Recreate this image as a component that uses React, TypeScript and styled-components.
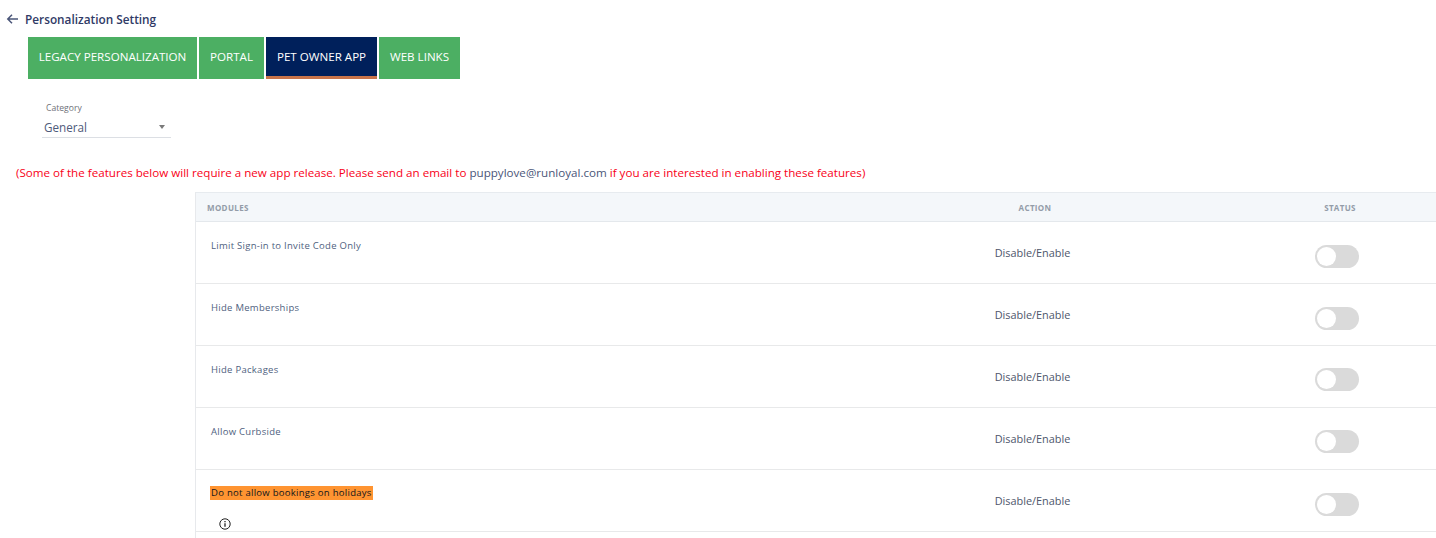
import React from "react";
import styled, { createGlobalStyle } from "styled-components";

const Global = createGlobalStyle`
  html, body { margin: 0; padding: 0; background: #fff; overflow: hidden; }
  body { font-family: "Open Sans", "Liberation Sans", sans-serif; }
`;

const Page = styled.div`
  width: 1436px;
  height: 538px;
  overflow: hidden;
`;

const TitleBar = styled.div`
  display: flex;
  align-items: center;
  height: 37px;
  padding: 1px 0 0 6px;
  box-sizing: border-box;
  gap: 6px;
  color: #2f3a66;
  font-size: 11.8px;
  font-weight: 600;
`;

const Tabs = styled.div`
  display: flex;
  gap: 2px;
  margin-left: 28px;
`;

const Tab = styled.div<{ $active?: boolean; $w: number }>`
  width: ${(p) => p.$w}px;
  height: 42px;
  box-sizing: border-box;
  display: flex;
  align-items: center;
  justify-content: center;
  font-size: 11.6px;
  color: #fff;
  background: ${(p) => (p.$active ? "#00205b" : "#4caf63")};
  border-bottom: ${(p) => (p.$active ? "3px solid #c8744a" : "none")};
  padding-bottom: ${(p) => (p.$active ? "0" : "3px")};
  white-space: nowrap;
`;

const Field = styled.div`
  width: 129px;
  margin: 22px 0 0 42px;
  height: 37px;
  border-bottom: 1px solid #dcdfe4;
  box-sizing: border-box;
  position: relative;
`;

const FieldLabel = styled.div`
  font-size: 8.6px;
  line-height: 12px;
  color: #6f7178;
  padding: 1px 0 0 4px;
`;

const FieldValue = styled.div`
  font-size: 11.7px;
  line-height: 16px;
  margin-top: 5px;
  padding-left: 2px;
  color: #4e5a7a;
`;

const Caret = styled.span`
  position: absolute;
  right: 6px;
  top: 24px;
  width: 0;
  height: 0;
  border-left: 3px solid transparent;
  border-right: 3px solid transparent;
  border-top: 4px solid #7a7a7a;
`;

const Notice = styled.div`
  margin: 26px 0 0 16px;
  height: 18px;
  line-height: 18px;
  font-size: 11.62px;
  color: #f80018;
  white-space: nowrap;
`;

const Email = styled.span`
  color: #4a5578;
`;

const Table = styled.div`
  margin: 10px 0 0 195px;
  border-left: 1px solid #e7e9ec;
  border-top: 1px solid #e7ebef;
`;

const HeadRow = styled.div`
  display: grid;
  grid-template-columns: 646px 386px 1fr;
  height: 29px;
  background: #f4f7fa;
  border-bottom: 1px solid #e4e8ec;
  box-sizing: border-box;
  align-items: center;
  font-size: 8px;
  font-weight: 700;
  letter-spacing: 0.35px;
  color: #939ca8;
`;

const HeadCell = styled.div<{ $align: "left" | "action" | "status" }>`
  padding-left: ${(p) => (p.$align === "left" ? "11px" : p.$align === "status" ? "16px" : "0")};
  text-align: ${(p) => (p.$align === "left" ? "left" : "center")};
`;

const Row = styled.div`
  display: grid;
  grid-template-columns: 646px 386px 1fr;
  height: 62px;
  box-sizing: border-box;
  border-bottom: 1px solid #e8e9ea;
`;

const ModuleCell = styled.div<{ $flagged?: boolean }>`
  padding: ${(p) => (p.$flagged ? "15px" : "16px")} 0 0 14px;
  font-size: 9.5px;
  letter-spacing: 0.28px;
  line-height: 16px;
  color: #4f5f80;
`;

const PlainName = styled.span`
  padding-left: 1px;
`;

const Highlight = styled.span`
  background: #ff9431;
  color: #10141c;
  display: inline-block;
  line-height: 14px;
  padding: 0 1px;
`;

const InfoWrap = styled.div`
  margin: 17px 0 0 9px;
  height: 12px;
  display: flex;
  color: #222;
`;

const ActionCell = styled.div`
  text-align: center;
  padding: 23px 5px 0 0;
  font-size: 10.9px;
  line-height: 16px;
  color: #4e566b;
`;

const StatusCell = styled.div<{ $top: number }>`
  display: flex;
  justify-content: center;
  padding: ${(p) => p.$top}px 0 0 10px;
`;

const Toggle = styled.div`
  width: 44px;
  height: 23px;
  border-radius: 12px;
  background: #dadada;
  position: relative;
`;

const Knob = styled.span`
  position: absolute;
  left: 2px;
  top: 2px;
  width: 19px;
  height: 19px;
  border-radius: 50%;
  background: #fff;
`;

const BackArrow = () => (
  <svg width="13" height="12" viewBox="0 0 13 12" fill="none" stroke="#4a5578" strokeWidth="1.5">
    <path d="M12 6H2M6 1.8 1.8 6 6 10.2" />
  </svg>
);

const InfoIcon = () => (
  <svg width="12" height="12" viewBox="0 0 12 12" fill="none" stroke="currentColor">
    <circle cx="6" cy="6" r="5.2" strokeWidth="1" />
    <path d="M6 5.2v3.6" strokeWidth="1.3" />
    <path d="M6 3v1.2" strokeWidth="1.3" />
  </svg>
);

const rows = [
  { name: "Limit Sign-in to Invite Code Only", top: 23 },
  { name: "Hide Memberships", top: 23 },
  { name: "Hide Packages", top: 22 },
  { name: "Allow Curbside", top: 22 },
  { name: "Do not allow bookings on holidays", top: 23, flagged: true },
  { name: "", top: 23 },
];

export default function App() {
  return (
    <Page>
      <Global />
      <TitleBar>
        <BackArrow />
        <span>Personalization Setting</span>
      </TitleBar>
      <Tabs>
        <Tab $w={169}>LEGACY PERSONALIZATION</Tab>
        <Tab $w={65}>PORTAL</Tab>
        <Tab $w={111} $active>PET OWNER APP</Tab>
        <Tab $w={81}>WEB LINKS</Tab>
      </Tabs>
      <Field>
        <FieldLabel>Category</FieldLabel>
        <FieldValue>General</FieldValue>
        <Caret />
      </Field>
      <Notice>
        (Some of the features below will require a new app release. Please send an email to{" "}
        <Email>puppylove@runloyal.com</Email> if you are interested in enabling these features)
      </Notice>
      <Table>
        <HeadRow>
          <HeadCell $align="left">MODULES</HeadCell>
          <HeadCell $align="action">ACTION</HeadCell>
          <HeadCell $align="status">STATUS</HeadCell>
        </HeadRow>
        {rows.map((r, i) => (
          <Row key={i}>
            <ModuleCell $flagged={r.flagged}>
              {r.flagged ? <Highlight>{r.name}</Highlight> : <PlainName>{r.name}</PlainName>}
              {r.flagged && (
                <InfoWrap>
                  <InfoIcon />
                </InfoWrap>
              )}
            </ModuleCell>
            <ActionCell>{r.name && "Disable/Enable"}</ActionCell>
            <StatusCell $top={r.top}>
              {r.name && (
                <Toggle>
                  <Knob />
                </Toggle>
              )}
            </StatusCell>
          </Row>
        ))}
      </Table>
    </Page>
  );
}
